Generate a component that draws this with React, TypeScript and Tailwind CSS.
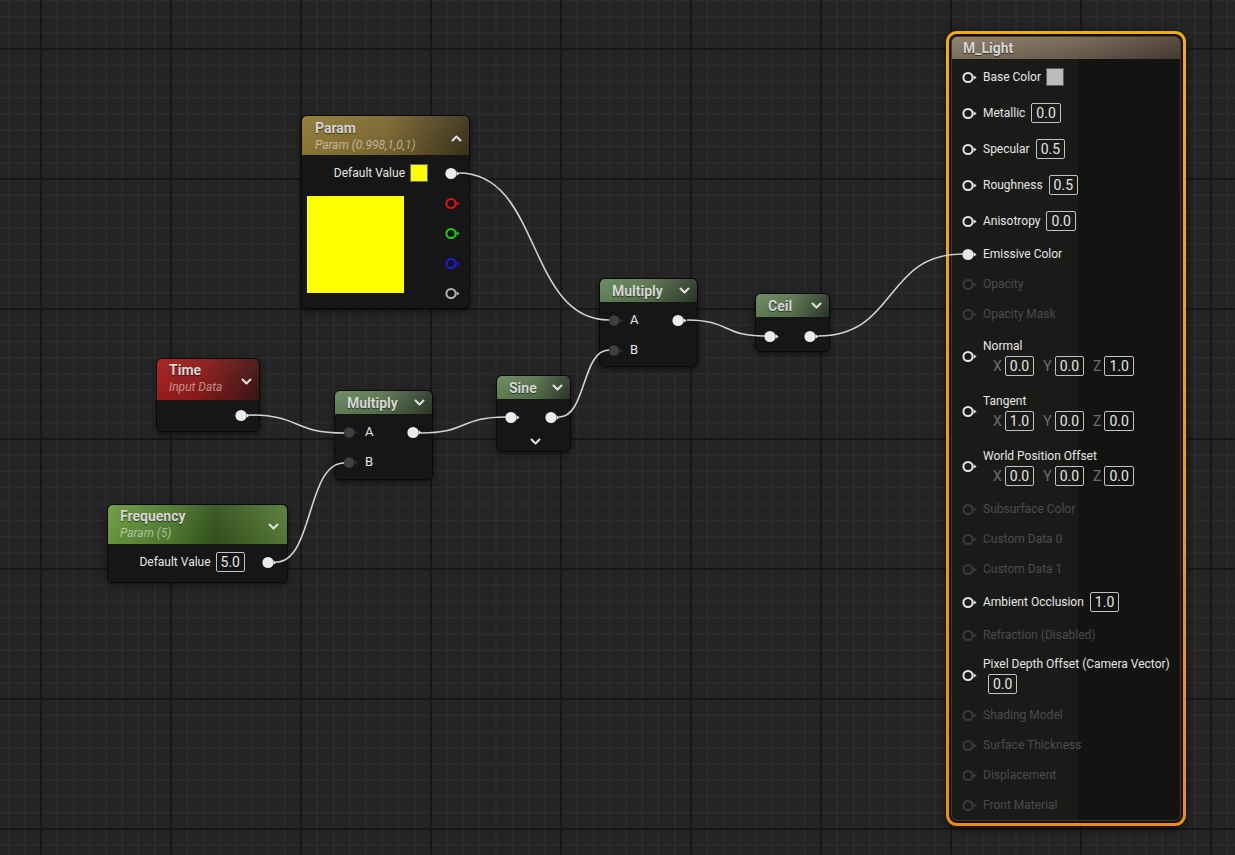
import React from 'react';

type PinKind = 'white' | 'hollow' | 'dark' | 'dim';

function Pin({ kind = 'white', color = '#ececec' }: { kind?: PinKind; color?: string }) {
  const c = kind === 'dim' ? '#3b3b3b' : kind === 'dark' ? '#3f3f3f' : color;
  const filled = kind === 'white' || kind === 'dark';
  return (
    <svg width="15" height="13" viewBox="0 0 15 13" className="shrink-0">
      {filled ? (
        <circle cx="6" cy="6.5" r={kind === 'white' ? 5.6 : 5.2} fill={c} />
      ) : (
        <circle cx="6" cy="6.5" r="4.6" fill="none" stroke={c} strokeWidth="2" />
      )}
      <polygon points="11.6,4.2 14.6,6.5 11.6,8.8" fill={kind === 'dark' ? '#303030' : c} />
    </svg>
  );
}

function Chevron({ up }: { up?: boolean }) {
  return (
    <svg width="11" height="7" viewBox="0 0 11 7" className="shrink-0">
      <polyline
        points={up ? '1.5,5.5 5.5,1.5 9.5,5.5' : '1.5,1.5 5.5,5.5 9.5,1.5'}
        fill="none"
        stroke="#e2e2e2"
        strokeWidth="2"
        strokeLinecap="round"
        strokeLinejoin="round"
      />
    </svg>
  );
}

function Box({ v }: { v: string }) {
  return (
    <span className="inline-flex h-[20px] items-center rounded-[2px] border border-[#c2c2c2] px-[4px] text-[14px] leading-none text-[#e4e4e4]">
      {v}
    </span>
  );
}

function Grid() {
  const xs: { p: number; major: boolean }[] = [];
  const ys: { p: number; major: boolean }[] = [];
  for (let i = -8; i < 80; i++) xs.push({ p: 41 + i * 16.25, major: i % 8 === 0 });
  for (let i = -8; i < 56; i++) ys.push({ p: 49 + i * 16.25, major: i % 8 === 0 });
  return (
    <svg className="absolute inset-0" width="1235" height="855">
      {xs.filter((l) => !l.major).map((l) => (
        <rect key={'vx' + l.p} x={l.p - 0.75} y={0} width={1.5} height={855} fill="#2c2c2c" />
      ))}
      {ys.filter((l) => !l.major).map((l) => (
        <rect key={'hy' + l.p} x={0} y={l.p - 0.75} width={1235} height={1.5} fill="#2c2c2c" />
      ))}
      {xs.filter((l) => l.major).map((l) => (
        <rect key={'mx' + l.p} x={l.p - 1} y={0} width={2} height={855} fill="#171717" />
      ))}
      {ys.filter((l) => l.major).map((l) => (
        <rect key={'my' + l.p} x={0} y={l.p - 1} width={1235} height={2} fill="#171717" />
      ))}
    </svg>
  );
}

const links: [number, number, number, number][] = [
  [459, 173, 609, 320],
  [249, 415, 344, 433],
  [276, 562, 344, 463],
  [421, 433, 506, 417],
  [559, 417, 609, 350],
  [687, 320, 765, 336],
  [818, 336, 963, 254],
];

function Wires() {
  return (
    <svg className="pointer-events-none absolute inset-0" width="1235" height="855">
      {links.map(([x1, y1, x2, y2], i) => {
        const c = Math.max((x2 - x1) * 0.55, 20);
        return (
          <path
            key={i}
            d={`M ${x1} ${y1} C ${x1 + c} ${y1}, ${x2 - c} ${y2}, ${x2} ${y2}`}
            fill="none"
            stroke="#d2d2d2"
            strokeWidth="1.6"
          />
        );
      })}
    </svg>
  );
}

const title = 'text-[14px] font-bold leading-[18px] text-[#d6d6d6] [text-shadow:0_1px_1px_rgba(0,0,0,0.6)]';
const sub = 'text-[12px] italic leading-[16px] text-white/50';
const shell = 'absolute flex flex-col overflow-hidden rounded-[6px] border border-[#090909] bg-[#151615] shadow-[0_2px_6px_rgba(0,0,0,0.55)]';
const greenHead =
  'bg-[linear-gradient(180deg,rgba(255,255,255,0.07),rgba(0,0,0,0.08)),linear-gradient(90deg,#668658_0%,#58744d_50%,#2d392a_100%)]';

function ParamNode() {
  return (
    <div className={`${shell} left-[301px] top-[115px] h-[194px] w-[169px]`}>
      <div className="flex h-[39px] shrink-0 justify-between bg-[linear-gradient(180deg,rgba(255,255,255,0.06),rgba(0,0,0,0.05)),linear-gradient(90deg,#917934_0%,#7c6730_50%,#3c331d_100%)] pl-[13px] pr-[7px] pt-[3px]">
        <div className="flex flex-col">
          <span className={title}>Param</span>
          <span className={sub}>Param (0.998,1,0,1)</span>
        </div>
        <div className="flex items-center pt-[2px]">
          <Chevron up />
        </div>
      </div>
      <div className="flex flex-col pt-[3px]">
        <div className="flex h-[30px] items-center justify-end pr-[9px]">
          <span className="mr-[5px]">Default Value</span>
          <span className="mr-[17px] h-[18px] w-[18px] border border-[#6a6a6a] bg-[#ffff00]" />
          <Pin />
        </div>
        <div className="flex">
          <div className="ml-[5px] mt-[8px] h-[97px] w-[97px] bg-[#ffff00]" />
          <div className="ml-auto flex flex-col pr-[9px]">
            <div className="flex h-[30px] items-center">
              <Pin kind="hollow" color="#e31212" />
            </div>
            <div className="flex h-[30px] items-center">
              <Pin kind="hollow" color="#14d214" />
            </div>
            <div className="flex h-[30px] items-center">
              <Pin kind="hollow" color="#1a1ae6" />
            </div>
            <div className="flex h-[30px] items-center">
              <Pin kind="hollow" color="#b4b4b4" />
            </div>
          </div>
        </div>
      </div>
    </div>
  );
}

function TimeNode() {
  return (
    <div className={`${shell} left-[156px] top-[358px] h-[74px] w-[104px]`}>
      <div className="flex h-[41px] shrink-0 justify-between bg-[linear-gradient(180deg,rgba(255,255,255,0.05),rgba(0,0,0,0.05)),linear-gradient(100deg,#a51c1c_0%,#8a1a1a_45%,#3a1515_100%)] pl-[12px] pr-[7px] pt-[2px]">
        <div className="flex flex-col">
          <span className={title}>Time</span>
          <span className={sub}>Input Data</span>
        </div>
        <div className="flex items-center pt-[2px]">
          <Chevron />
        </div>
      </div>
      <div className="flex h-[30px] items-center justify-end pr-[9px]">
        <Pin />
      </div>
    </div>
  );
}

function FrequencyNode() {
  return (
    <div className={`${shell} left-[107px] top-[504px] h-[79px] w-[181px]`}>
      <div className="flex h-[39px] shrink-0 justify-between bg-[linear-gradient(180deg,rgba(255,255,255,0.05),rgba(0,0,0,0.05)),linear-gradient(90deg,#6c9b3e_0%,#4f7a30_35%,#34521f_60%,#567c37_100%)] pl-[12px] pr-[8px] pt-[2px]">
        <div className="flex flex-col">
          <span className={title}>Frequency</span>
          <span className={sub}>Param (5)</span>
        </div>
        <div className="flex items-center pt-[2px]">
          <Chevron />
        </div>
      </div>
      <div className="mt-[3px] flex h-[30px] items-center justify-end pr-[10px]">
        <span className="mr-[5px]">Default Value</span>
        <span className="mr-[17px]">
          <Box v="5.0" />
        </span>
        <Pin />
      </div>
    </div>
  );
}

function SmallHead({ name }: { name: string }) {
  return (
    <div className={`flex h-[23px] shrink-0 items-center justify-between ${greenHead} pl-[12px] pr-[7px]`}>
      <span className={title}>{name}</span>
      <Chevron />
    </div>
  );
}

function MultiplyNode({ pos }: { pos: string }) {
  return (
    <div className={`${shell} ${pos} w-[99px]`}>
      <SmallHead name="Multiply" />
      <div className="flex flex-col pt-[3px]">
        <div className="flex h-[30px] items-center justify-between pl-[8px] pr-[10px]">
          <div className="flex items-center gap-[7px]">
            <Pin kind="dark" />
            <span className="text-[13px]">A</span>
          </div>
          <Pin />
        </div>
        <div className="flex h-[30px] items-center gap-[7px] pl-[8px]">
          <Pin kind="dark" />
          <span className="text-[13px]">B</span>
        </div>
      </div>
    </div>
  );
}

function SineNode() {
  return (
    <div className={`${shell} left-[496px] top-[375px] h-[77px] w-[75px]`}>
      <SmallHead name="Sine" />
      <div className="mt-[3px] flex h-[30px] items-center justify-between pl-[8px] pr-[10px]">
        <Pin />
        <Pin />
      </div>
      <div className="flex h-[18px] items-center justify-center pl-[3px]">
        <Chevron />
      </div>
    </div>
  );
}

function CeilNode() {
  return (
    <div className={`${shell} left-[755px] top-[293px] h-[59px] w-[75px]`}>
      <SmallHead name="Ceil" />
      <div className="mt-[4px] flex h-[30px] items-center justify-between pl-[8px] pr-[10px]">
        <Pin />
        <Pin />
      </div>
    </div>
  );
}

type Row = {
  label: string;
  value?: string;
  swatch?: boolean;
  connected?: boolean;
  dim?: boolean;
  vec?: string[];
  below?: string;
};

const rows: Row[] = [
  { label: 'Base Color', swatch: true },
  { label: 'Metallic', value: '0.0' },
  { label: 'Specular', value: '0.5' },
  { label: 'Roughness', value: '0.5' },
  { label: 'Anisotropy', value: '0.0' },
  { label: 'Emissive Color', connected: true },
  { label: 'Opacity', dim: true },
  { label: 'Opacity Mask', dim: true },
  { label: 'Normal', vec: ['0.0', '0.0', '1.0'] },
  { label: 'Tangent', vec: ['1.0', '0.0', '0.0'] },
  { label: 'World Position Offset', vec: ['0.0', '0.0', '0.0'] },
  { label: 'Subsurface Color', dim: true },
  { label: 'Custom Data 0', dim: true },
  { label: 'Custom Data 1', dim: true },
  { label: 'Ambient Occlusion', value: '1.0' },
  { label: 'Refraction (Disabled)', dim: true },
  { label: 'Pixel Depth Offset (Camera Vector)', below: '0.0' },
  { label: 'Shading Model', dim: true },
  { label: 'Surface Thickness', dim: true },
  { label: 'Displacement', dim: true },
  { label: 'Front Material', dim: true },
];

function MatRow({ r }: { r: Row }) {
  const pin = <Pin kind={r.dim ? 'dim' : r.connected ? 'white' : 'hollow'} color="#e6e6e6" />;
  if (r.vec) {
    return (
      <div className="flex h-[55px] items-center gap-[6px] pl-[10px]">
        {pin}
        <div className="flex flex-col">
          <span className="leading-[16px]">{r.label}</span>
          <div className="mt-[2px] flex items-center gap-[9px] pl-[10px]">
            {['X', 'Y', 'Z'].map((a, i) => (
              <div key={a} className="flex items-center gap-[3px]">
                <span className="text-[14px] leading-none text-[#6e6e6e]">{a}</span>
                <Box v={r.vec![i]} />
              </div>
            ))}
          </div>
        </div>
      </div>
    );
  }
  if (r.below) {
    return (
      <div className="flex h-[50px] items-center gap-[6px] pl-[10px]">
        {pin}
        <div className="flex flex-col">
          <span className="leading-[16px]">{r.label}</span>
          <div className="mt-[2px] pl-[5px]">
            <Box v={r.below} />
          </div>
        </div>
      </div>
    );
  }
  const tall = r.value || r.swatch;
  return (
    <div className={`flex items-center gap-[6px] pl-[10px] ${tall ? 'h-[36px]' : 'h-[30px]'}`}>
      {pin}
      <span className={r.dim ? 'text-[#4b4b4b]' : ''}>{r.label}</span>
      {r.swatch && <span className="-ml-[1px] h-[18px] w-[18px] border border-[#5c5c5c] bg-[#bcbcbc]" />}
      {r.value && <Box v={r.value} />}
    </div>
  );
}

function MaterialNode() {
  return (
    <div className="absolute left-[946px] top-[31px] h-[795px] w-[240px] rounded-[11px] bg-[linear-gradient(180deg,#f2ad0c,#ee8c10)] p-[3px] shadow-[0_2px_8px_rgba(0,0,0,0.6)]">
      <div className="h-full w-full rounded-[8px] bg-[#101010] p-[2px]">
        <div className="flex h-full w-full flex-col overflow-hidden rounded-[6px] border border-[#4c3812] bg-[linear-gradient(90deg,#1a1b19_0px,#1a1b19_126px,#131412_126px)]">
          <div className="flex h-[22px] shrink-0 items-center bg-[linear-gradient(180deg,rgba(255,255,255,0.08),rgba(0,0,0,0.1)),linear-gradient(90deg,#8a7864_0%,#756453_50%,#4b3f35_100%)] pl-[11px]">
            <span className={title}>M_Light</span>
          </div>
          {rows.map((r) => (
            <MatRow key={r.label} r={r} />
          ))}
        </div>
      </div>
    </div>
  );
}

export default function App() {
  return (
    <div className="relative h-[855px] w-[1235px] select-none overflow-hidden bg-[#242424] font-[family-name:Roboto,'Open_Sans',sans-serif] text-[12px] text-[#e6e6e6]">
      <Grid />
      <ParamNode />
      <TimeNode />
      <FrequencyNode />
      <MultiplyNode pos="left-[334px] top-[390px] h-[90px]" />
      <SineNode />
      <MultiplyNode pos="left-[599px] top-[278px] h-[89px]" />
      <CeilNode />
      <MaterialNode />
      <Wires />
    </div>
  );
}
